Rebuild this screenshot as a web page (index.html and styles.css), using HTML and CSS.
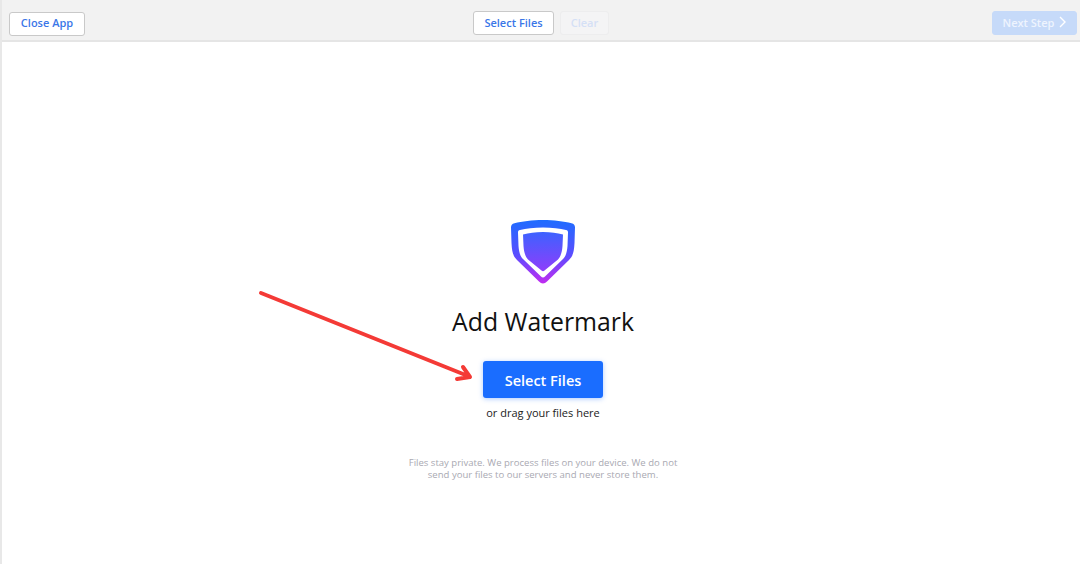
FILE: index.html
```html
<!DOCTYPE html>
<html lang="en">
<head>
  <meta charset="UTF-8" />
  <title>Add Watermark</title>
  <link rel="stylesheet" href="styles.css">
</head>
<body>
  <div class="app">
    <div class="toolbar">
      <div class="toolbar-left">
        <button class="btn btn-close">Close App</button>
      </div>
      <div class="toolbar-center">
        <button class="btn btn-select">Select Files</button>
        <button class="btn btn-clear">Clear</button>
      </div>
      <div class="toolbar-right">
        <button class="btn btn-next">Next Step
          <svg class="chevron" width="7" height="12" viewBox="0 0 7 12"><path d="M1 1l5 5-5 5" fill="none" stroke="#fff" stroke-width="1.4"/></svg>
        </button>
      </div>
    </div>

    <div class="main">
      <svg class="logo" width="66" height="66" viewBox="0 0 66 66">
        <defs>
          <linearGradient id="shieldEdge" x1="0" y1="0" x2="0" y2="1">
            <stop offset="0" stop-color="#1f6cff"/>
            <stop offset="0.55" stop-color="#5a4dff"/>
            <stop offset="1" stop-color="#c02cf0"/>
          </linearGradient>
          <linearGradient id="shieldFill" x1="0" y1="0" x2="0" y2="1">
            <stop offset="0" stop-color="#3d62ff"/>
            <stop offset="1" stop-color="#8f3dfb"/>
          </linearGradient>
        </defs>
        <path d="M33 1C44 1 54 2.500 61.500 4.200C64 4.800 65 6 65 8.500L64.500 24C64 33 63 37 59 41L37 62.500C34.500 65 31.500 65 29 62.500L7 41C3 37 2 33 1.500 24L1 8.500C1 6 2 4.800 4.500 4.200C12 2.500 22 1 33 1Z" fill="url(#shieldEdge)"/>
        <path d="M33 8.500C42 8.500 50 9.500 56 11C57.500 11.400 58 12 58 13.500L57.500 27C57 33 56 37 53 40L35 57.500C34 58.800 32 58.800 31 57.500L13 40C10 37 9 33 8.500 27L8 13.500C8 12 8.500 11.400 10 11C16 9.500 24 8.500 33 8.500Z" fill="#fff"/>
        <path d="M33 13C41 13 47 14 53 15.500L52.500 27C52 33 51 37 48 40.500L34.500 51.500C33.500 52.500 32.500 52.500 31.500 51.500L18 40.500C15 37 14 33 13.500 27L13 15.500C19 14 25 13 33 13Z" fill="url(#shieldFill)"/>
      </svg>
      <h1 class="title">Add Watermark</h1>
      <button class="btn-primary">Select Files</button>
      <p class="drag-hint">or drag your files here</p>
      <p class="privacy">Files stay private. We process files on your device. We do not<br>send your files to our servers and never store them.</p>
    </div>
  </div>

  <svg class="arrow" width="1080" height="564" viewBox="0 0 1080 564">
    <path d="M261 293L468 376M463 367L470 377L457 379" fill="none" stroke="#f43a36" stroke-width="4" stroke-linejoin="round" stroke-linecap="round"/>
  </svg>
</body>
</html>
```

FILE: styles.css
```css
html, body {
  margin: 0;
  height: 100%;
  background: #fff;
  overflow: hidden;
}

body {
  font-family: 'Open Sans', 'Noto Sans', sans-serif;
  position: relative;
}

.app {
  height: 100%;
  display: flex;
  flex-direction: column;
  border-left: 2px solid #e8e8e8;
  box-sizing: border-box;
}

.toolbar {
  height: 42px;
  box-sizing: border-box;
  flex: none;
  display: grid;
  grid-template-columns: 1fr auto 1fr;
  align-items: center;
  padding: 6px 3px 0 7px;
  background: #f2f2f2;
  border-bottom: 2px solid #e5e5e5;
}

.toolbar-center {
  display: flex;
  gap: 6px;
  margin-right: 4px;
}

.toolbar-right {
  display: flex;
  justify-content: flex-end;
}

.btn {
  height: 24px;
  box-sizing: border-box;
  padding: 0 0 2px;
  background: #fff;
  border: 1px solid #c9c9c9;
  border-radius: 3px;
  color: #3a76e8;
  font-family: inherit;
  font-size: 11px;
  font-weight: 600;
  white-space: nowrap;
}

.btn-close {
  width: 76px;
}

.btn-select {
  width: 81px;
}

.btn-clear {
  width: 49px;
  background: #f4f4f5;
  border-color: #ededee;
  color: #d4e0f6;
}

.btn-next {
  width: 85px;
  background: #c6daf9;
  border-color: #c6daf9;
  color: #eef4fe;
  display: flex;
  align-items: center;
  justify-content: center;
  gap: 5px;
}

.main {
  flex: 1;
  display: flex;
  flex-direction: column;
  align-items: center;
  padding: 177px 0 0 4px;
}

.logo {
  display: block;
}

.title {
  margin: 18px 0 0;
  font-size: 24.800px;
  line-height: 36px;
  font-weight: 400;
  color: #111;
}

.btn-primary {
  width: 120px;
  height: 37px;
  margin-top: 22px;
  padding: 2px 0 0;
  background: #1a6dff;
  border: none;
  border-radius: 3px;
  box-shadow: 0 1px 5px rgba(26, 109, 255, 0.35);
  color: #fff;
  font-family: inherit;
  font-size: 14.500px;
  font-weight: 600;
}

.drag-hint {
  margin: 6px 0 0;
  font-size: 11px;
  line-height: 18px;
  color: #222;
}

.privacy {
  margin: 35px 0 0;
  font-size: 9.550px;
  line-height: 12px;
  text-align: center;
  color: #a9a9b2;
}

.arrow {
  position: absolute;
  left: 0;
  top: 0;
  pointer-events: none;
}
```
